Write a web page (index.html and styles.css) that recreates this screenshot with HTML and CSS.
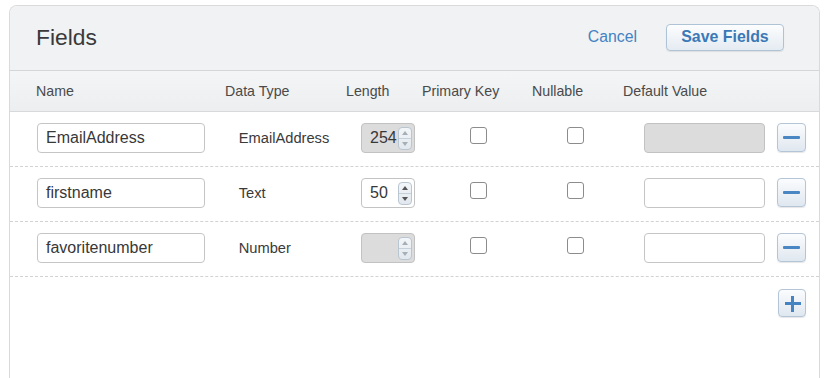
FILE: index.html
```html
<!DOCTYPE html>
<html>
<head>
<meta charset="utf-8">
<link rel="stylesheet" href="styles.css">
</head>
<body>
<div class="panel">
  <div class="header">
    <div class="title">Fields</div>
    <div class="actions">
      <a class="cancel">Cancel</a>
      <button class="save">Save Fields</button>
    </div>
  </div>
  <div class="cols">
    <div class="h h-name">Name</div>
    <div class="h">Data Type</div>
    <div class="h">Length</div>
    <div class="h">Primary Key</div>
    <div class="h">Nullable</div>
    <div class="h">Default Value</div>
  </div>

  <div class="row">
    <div class="c c-name"><div class="field">EmailAddress</div></div>
    <div class="c c-type">EmailAddress</div>
    <div class="c c-len"><div class="num disabled"><span class="numval">254</span><span class="spin"><span class="up"></span><span class="down"></span></span></div></div>
    <div class="c c-pk"><span class="cb"></span></div>
    <div class="c c-null"><span class="cb"></span></div>
    <div class="c c-def"><div class="field def disabled"></div><button class="iconbtn minus"><span></span></button></div>
  </div>

  <div class="row">
    <div class="c c-name"><div class="field">firstname</div></div>
    <div class="c c-type">Text</div>
    <div class="c c-len"><div class="num"><span class="numval">50</span><span class="spin"><span class="up"></span><span class="down"></span></span></div></div>
    <div class="c c-pk"><span class="cb"></span></div>
    <div class="c c-null"><span class="cb"></span></div>
    <div class="c c-def"><div class="field def"></div><button class="iconbtn minus"><span></span></button></div>
  </div>

  <div class="row">
    <div class="c c-name"><div class="field">favoritenumber</div></div>
    <div class="c c-type">Number</div>
    <div class="c c-len"><div class="num disabled"><span class="numval"></span><span class="spin"><span class="up"></span><span class="down"></span></span></div></div>
    <div class="c c-pk"><span class="cb"></span></div>
    <div class="c c-null"><span class="cb"></span></div>
    <div class="c c-def"><div class="field def"></div><button class="iconbtn minus"><span></span></button></div>
  </div>

  <div class="addrow">
    <button class="iconbtn plus"><span class="ph"></span><span class="pv"></span></button>
  </div>
</div>
</body>
</html>
```

FILE: styles.css
```css
* { box-sizing: border-box; }
html, body { margin: 0; padding: 0; background: #fff; }
body { font-family: "Liberation Sans", Arial, Helvetica, sans-serif; color: #333; overflow: hidden; }

.panel {
  margin: 5px 0 0 9px;
  width: 811px;
  height: 373px;
  border: 1px solid #dadada;
  border-bottom: none;
  border-radius: 8px 8px 0 0;
  background: #fff;
  overflow: hidden;
}

.header {
  height: 65px;
  background: #f1f2f4;
  border-bottom: 1px solid #d5d6d8;
  display: flex;
  align-items: center;
  justify-content: space-between;
  padding: 0 35px 2px 26px;
}
.title { font-size: 22.8px; color: #3a3a3a; }
.actions { display: flex; align-items: center; gap: 29px; }
.cancel { font-size: 15.8px; color: #4283c3; }
.save {
  font-family: inherit;
  font-size: 15.9px;
  font-weight: bold;
  color: #3b79b6;
  width: 118px;
  height: 27px;
  padding: 0;
  border: 1px solid #afc3d6;
  border-radius: 4px;
  background: linear-gradient(#fcfdfe, #e4ebf2);
  box-shadow: 0 1px 1px rgba(0,0,0,0.08);
}

.cols, .row {
  display: grid;
  grid-template-columns: 205px 121px 76px 110px 91px 1fr;
}
.cols {
  height: 41px;
  align-items: center;
  background: linear-gradient(#f4f5f6, #eceef0);
  border-bottom: 1px solid #d8d9db;
  padding-bottom: 1px;
  font-size: 14.2px;
  color: #4a4a4a;
}
.h { padding-left: 10px; }
.h-name { padding-left: 26px; }

.row {
  height: 55px;
  border-bottom: 1px dashed #d2d2d2;
  padding-top: 11px;
  align-items: start;
}
.c { height: 30px; display: flex; align-items: center; }

.field {
  height: 30px;
  border: 1px solid #c5c5c5;
  border-radius: 4px;
  background: #fff;
  font-size: 16px;
  color: #383838;
  padding: 0 8px;
  display: flex;
  align-items: center;
}
.c-name .field { margin-left: 27px; width: 168px; }
.c-type { padding-left: 23.7px; font-size: 14.7px; color: #3a3a3a; }
.c-len { padding-left: 25px; }
.num {
  width: 54px; height: 30px; flex: none;
  border: 1px solid #c3c3c3;
  border-radius: 4px;
  background: #fff;
  display: flex;
  align-items: center;
  justify-content: space-between;
  padding: 0 2px 0 8px;
  font-size: 16px;
  color: #383838;
}
.disabled { background: #dcdcdc; border-color: #c2c2c2; }
.spin {
  width: 14px; height: 23px;
  border: 1px solid #b9c6d2;
  border-radius: 4px;
  background: linear-gradient(#f3f6f9, #e2e8ee);
  display: flex;
  flex-direction: column;
}
.spin .up, .spin .down {
  flex: 1;
  display: flex;
  align-items: center;
  justify-content: center;
}
.spin .up { border-bottom: 1px solid #c6d0da; }
.spin .up::before {
  content: "";
  border-left: 3.5px solid transparent;
  border-right: 3.5px solid transparent;
  border-bottom: 4px solid #555;
}
.spin .down::before {
  content: "";
  border-left: 3.5px solid transparent;
  border-right: 3.5px solid transparent;
  border-top: 4px solid #555;
}
.disabled .spin .up::before { border-bottom-color: #a6aeb6; }
.disabled .spin .down::before { border-top-color: #a6aeb6; }

.c-pk { padding-left: 57.5px; }
.c-null { padding-left: 45px; }
.cb {
  width: 17px; height: 17px;
  border: 1.5px solid #8c8c8c;
  border-radius: 3px;
  background: #fff;
  margin-top: -6px;
}

.c-def { padding-left: 30.5px; gap: 12px; }
.def { width: 121px; }

.iconbtn {
  width: 29px; height: 29px;
  padding: 0;
  border: 1px solid #b3c5d7;
  border-radius: 4px;
  background: linear-gradient(#fbfcfe, #dfe7ef);
  box-shadow: 0 1px 1px rgba(0,0,0,0.1);
  display: flex;
  align-items: center;
  justify-content: center;
  flex: none;
  margin-top: -1px;
}
.minus span { width: 17px; height: 2.5px; background: #4a86c4; border-radius: 1px; }

.addrow {
  display: flex;
  justify-content: flex-end;
  padding: 12px 13px 0 0;
}
.plus { width: 28px; height: 28px; position: relative; margin-top: 0; }
.plus .ph { position: absolute; left: 5.5px; top: 12px; width: 16px; height: 2.5px; background: #4583c3; }
.plus .pv { position: absolute; left: 12.3px; top: 5.5px; width: 2.5px; height: 16px; background: #4583c3; }
```
